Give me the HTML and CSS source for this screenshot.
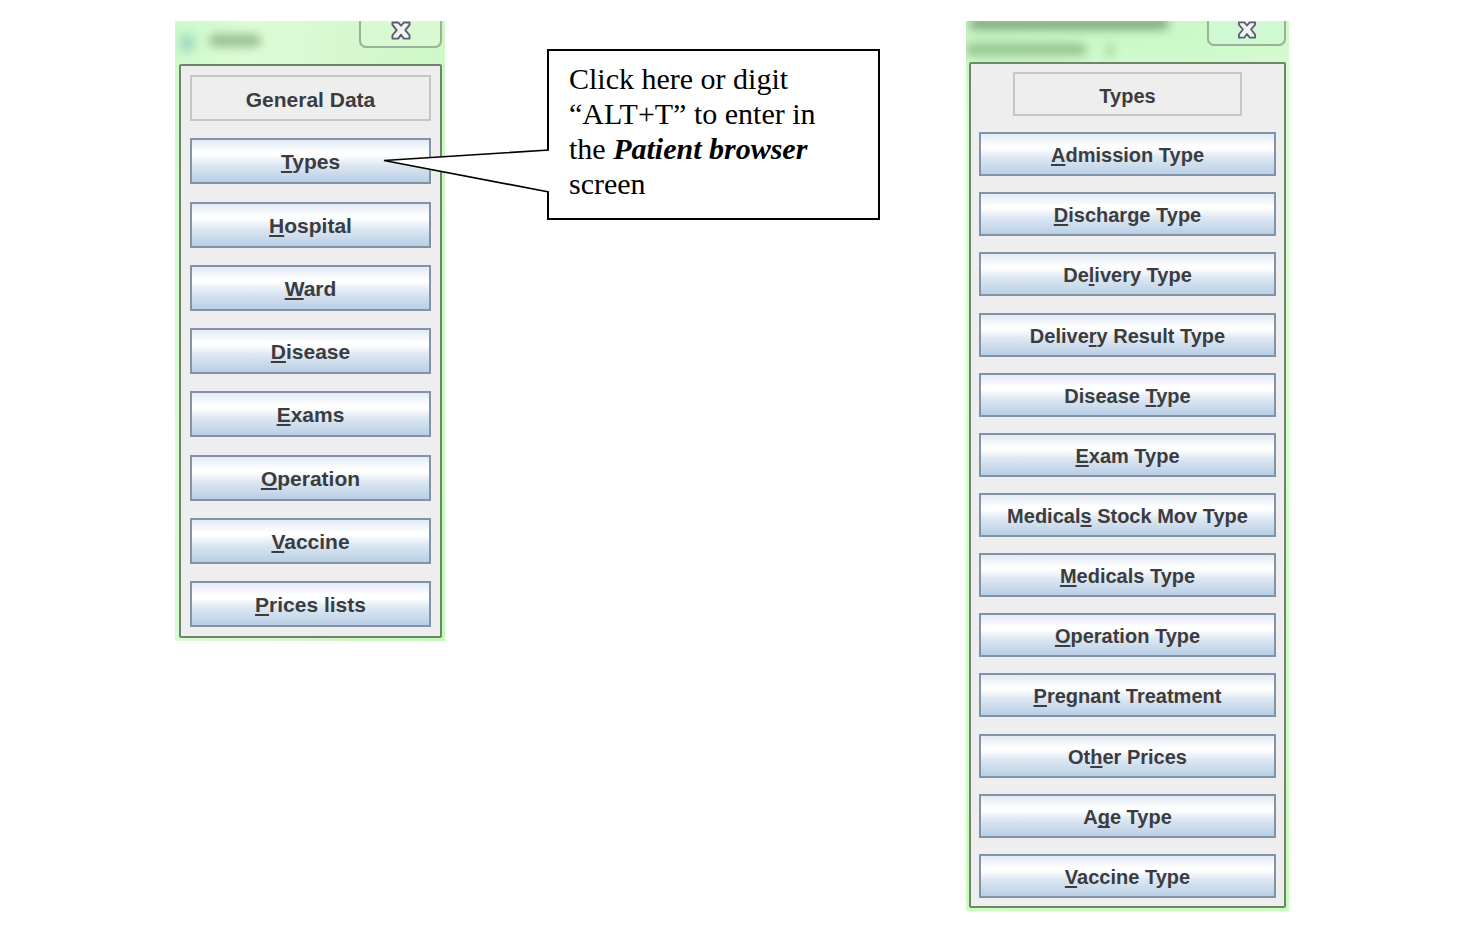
FILE: index.html
```
<!DOCTYPE html>
<html lang="en">
<head>
<meta charset="utf-8">
<title>General Data and Types menus</title>
<link rel="stylesheet" href="styles.css">
</head>
<body>
<main class="page">
  <section class="window window-general" aria-labelledby="general-title">
    <header class="titlebar">
      <span class="smudge smudge-icon"></span>
      <span class="smudge smudge-title"></span>
      <button class="close" type="button" aria-label="Close General Data">
        <svg class="close-icon" viewBox="0 0 22 20" aria-hidden="true"><path d="M2 1.500H8L11 5L14 1.500H20V4L15.500 9.500L20 15V18.500H14L11 14.500L8 18.500H2V15L6.500 9.500L2 4Z" fill="#f2f2f4" stroke="#5b5d70" stroke-width="2" stroke-linejoin="round"/></svg>
      </button>
    </header>
    <nav class="panel">
      <h1 class="heading" id="general-title">General Data</h1>
      <button class="item" type="button"><u>T</u>ypes</button>
      <button class="item" type="button"><u>H</u>ospital</button>
      <button class="item" type="button"><u>W</u>ard</button>
      <button class="item" type="button"><u>D</u>isease</button>
      <button class="item" type="button"><u>E</u>xams</button>
      <button class="item" type="button"><u>O</u>peration</button>
      <button class="item" type="button"><u>V</u>accine</button>
      <button class="item" type="button"><u>P</u>rices lists</button>
    </nav>
  </section>

  <aside class="callout">
    <svg class="pointer" viewBox="0 0 168 48" aria-hidden="true"><path d="M167 3L2 13.500L167 45Z" fill="#fff"/><path d="M167 3L2 13.500L167 45" fill="none" stroke="#000" stroke-width="1.700"/></svg>
    <p class="callout-text">Click here or digit<br>“ALT+T” to enter in<br>the <strong><em>Patient browser</em></strong><br>screen</p>
  </aside>

  <section class="window window-types" aria-labelledby="types-title">
    <header class="titlebar">
      <span class="smudge smudge-top"></span>
      <span class="smudge smudge-line"></span>
      <span class="smudge smudge-mark"></span>
      <button class="close" type="button" aria-label="Close Types">
        <svg class="close-icon" viewBox="0 0 22 20" aria-hidden="true"><path d="M2 1.500H8L11 5L14 1.500H20V4L15.500 9.500L20 15V18.500H14L11 14.500L8 18.500H2V15L6.500 9.500L2 4Z" fill="#f2f2f4" stroke="#5b5d70" stroke-width="2" stroke-linejoin="round"/></svg>
      </button>
    </header>
    <nav class="panel">
      <h2 class="heading" id="types-title">Types</h2>
      <button class="item" type="button"><u>A</u>dmission Type</button>
      <button class="item" type="button"><u>D</u>ischarge Type</button>
      <button class="item" type="button">De<u>l</u>ivery Type</button>
      <button class="item" type="button">Delive<u>r</u>y Result Type</button>
      <button class="item" type="button">Disease <u>T</u>ype</button>
      <button class="item" type="button"><u>E</u>xam Type</button>
      <button class="item" type="button">Medical<u>s</u> Stock Mov Type</button>
      <button class="item" type="button"><u>M</u>edicals Type</button>
      <button class="item" type="button"><u>O</u>peration Type</button>
      <button class="item" type="button"><u>P</u>regnant Treatment</button>
      <button class="item" type="button">Ot<u>h</u>er Prices</button>
      <button class="item" type="button">A<u>g</u>e Type</button>
      <button class="item" type="button"><u>V</u>accine Type</button>
    </nav>
  </section>
</main>
</body>
</html>
```

FILE: styles.css
```
* {
  box-sizing: border-box;
}

body {
  margin: 0;
  background: #fff;
  color: #3c3c40;
  font-family: "Liberation Sans", Arial, sans-serif;
}

.page {
  display: grid;
  grid-template-columns: 175fr 270px 102px 333px 86fr 323px 184fr;
  align-items: start;
  padding: 21px 0;
}

.window {
  display: flex;
  flex-direction: column;
  padding: 0 3px 3px 4px;
  overflow: hidden;
}

.window-general {
  grid-column: 2;
  min-height: 620px;
  font-size: 21px;
  background: linear-gradient(100deg, #cdfac9, #dcfbd6 20%, #d3f7cc 60%, #c2fbb8);
}

.window-types {
  grid-column: 6;
  min-height: 890px;
  padding-left: 3px;
  font-size: 20px;
  background: linear-gradient(170deg, #c5f6c4, #d6fccf 12%, #c9fdbf);
}

.titlebar {
  position: relative;
  display: flex;
  justify-content: flex-end;
  align-items: flex-start;
  height: 43px;
}

.window-types .titlebar {
  height: 41px;
}

.close {
  display: flex;
  justify-content: center;
  width: 83px;
  height: 27px;
  padding: 0;
  border: 2px solid #9bb197;
  border-top: 0;
  border-radius: 0 0 7px 7px;
  background: #d9f9d2;
}

.window-types .close {
  width: 79px;
  height: 25px;
  background: #d0f8d3;
}

.close-icon {
  width: 22px;
  height: 19px;
}

.window-types .close-icon {
  width: 20px;
  height: 18px;
}

.smudge {
  position: absolute;
  border-radius: 8px;
  filter: blur(5px);
}

.smudge-icon {
  left: 0;
  top: 12px;
  width: 16px;
  height: 20px;
  background: #a4dcc4;
}

.smudge-title {
  left: 30px;
  top: 13px;
  width: 52px;
  height: 13px;
  background: #98c091;
}

.smudge-top {
  left: 0;
  top: -4px;
  width: 200px;
  height: 13px;
  background: #86ac85;
}

.smudge-line {
  left: -4px;
  top: 22px;
  width: 122px;
  height: 13px;
  background: #98c793;
}

.smudge-mark {
  left: 138px;
  top: 23px;
  width: 6px;
  height: 12px;
  background: #98c793;
}

.panel {
  flex: 1;
  display: flex;
  flex-direction: column;
  justify-content: space-between;
  padding: 9px;
  border: 2px solid #6d8569;
  border-radius: 2px;
  background: #eee;
}

.window-types .panel {
  padding: 8px;
}

.heading {
  margin: 0;
  padding: 11px 0 7px;
  border: 2px solid #c6c6c6;
  color: #3c3c40;
  font-size: inherit;
  font-weight: bold;
  line-height: 24px;
  text-align: center;
}

.window-types .heading {
  margin: 0 34px;
  padding: 10px 0 6px;
}

.item {
  padding: 10px 0 8px;
  border: 2px solid #8293a8;
  background: linear-gradient(#e2eaf4, #fff 30%, #fff 36%, #dce7f2 60%, #b9cfe5);
  color: inherit;
  font: inherit;
  font-weight: bold;
  line-height: 24px;
  text-align: center;
}

.window-types .item {
  padding: 9px 0 7px;
}

.item u {
  text-decoration-thickness: 2px;
  text-underline-offset: 2px;
  text-decoration-skip-ink: none;
}

.callout {
  grid-column: 4;
  position: relative;
  margin-top: 28px;
  padding: 10px 20px 17px;
  border: 2px solid #000;
  background: #fff;
  color: #000;
  font-family: "Liberation Serif", "Times New Roman", serif;
  font-size: 30px;
  line-height: 35px;
}

.callout-text {
  margin: 0;
}

.pointer {
  position: absolute;
  left: -167px;
  top: 96px;
  width: 168px;
  height: 48px;
}
```
